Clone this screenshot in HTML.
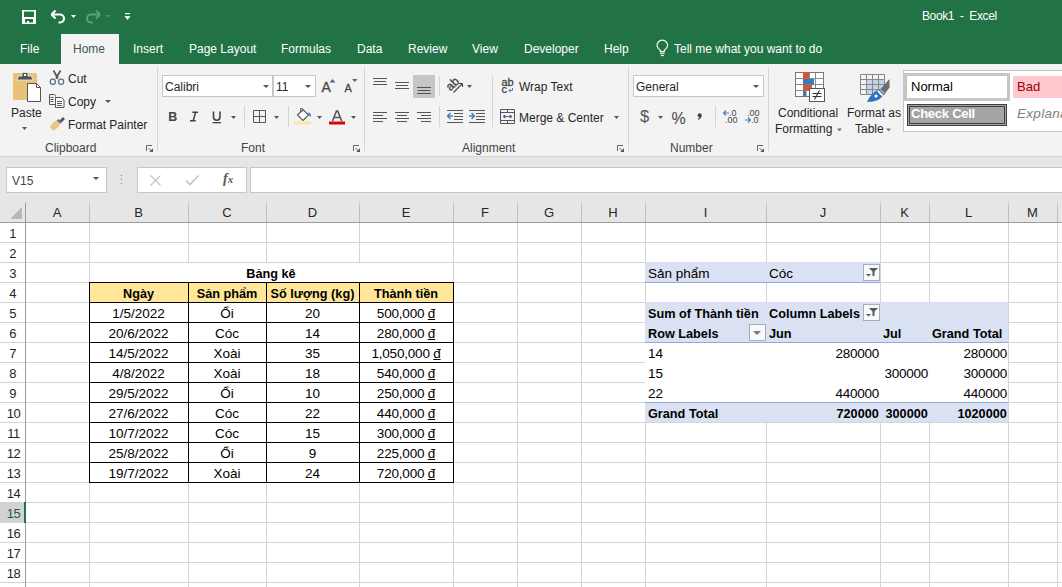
<!DOCTYPE html>
<html><head><meta charset="utf-8"><title>Excel</title><style>
*{margin:0;padding:0;box-sizing:border-box}
body{width:1062px;height:587px;overflow:hidden;position:relative;font-family:"Liberation Sans",sans-serif;background:#fff;color:#262626}
.a{position:absolute;white-space:nowrap}
.t12{font-size:12px;line-height:14px}
.w{color:#fff}
.c{font-size:13.5px;line-height:16px;color:#000}
.cb{font-size:12.7px;line-height:16px;color:#000;font-weight:bold}
.hl{position:absolute;height:1px}
.vl{position:absolute;width:1px}
svg{position:absolute;overflow:visible}
</style></head><body>

<div class="a" style="left:0;top:0;width:1062px;height:64px;background:#217346"></div>
<div class="a" style="left:61px;top:34px;width:58px;height:30px;background:#f3f3f3"></div>
<div class="a t12" style="left:20px;top:42px;color:#fff">File</div>
<div class="a t12" style="left:73px;top:42px;color:#3c5a47">Home</div>
<div class="a t12" style="left:133px;top:42px;color:#fff">Insert</div>
<div class="a t12" style="left:189px;top:42px;color:#fff">Page Layout</div>
<div class="a t12" style="left:281px;top:42px;color:#fff">Formulas</div>
<div class="a t12" style="left:357px;top:42px;color:#fff">Data</div>
<div class="a t12" style="left:408px;top:42px;color:#fff">Review</div>
<div class="a t12" style="left:472px;top:42px;color:#fff">View</div>
<div class="a t12" style="left:524px;top:42px;color:#fff">Developer</div>
<div class="a t12" style="left:604px;top:42px;color:#fff">Help</div>
<div class="a t12" style="left:674px;top:42px;color:#fff">Tell me what you want to do</div>
<div class="a t12" style="left:922px;top:9px;color:#fff;letter-spacing:-0.4px">Book1&nbsp; -&nbsp; Excel</div>
<div class="a" style="left:0;top:64px;width:1062px;height:92px;background:#f3f3f3"></div>
<div class="a" style="left:0;top:156px;width:1062px;height:1px;background:#d4d4d4"></div>
<div class="a" style="left:0;top:157px;width:1062px;height:66px;background:#e6e6e6"></div>
<div class="a" style="left:26px;top:223px;width:1036px;height:364px;background:#fff"></div>
<div class="hl" style="left:0;top:242px;width:1062px;background:#d4d4d4"></div>
<div class="hl" style="left:0;top:262px;width:1062px;background:#d4d4d4"></div>
<div class="hl" style="left:0;top:282px;width:1062px;background:#d4d4d4"></div>
<div class="hl" style="left:0;top:302px;width:1062px;background:#d4d4d4"></div>
<div class="hl" style="left:0;top:322px;width:1062px;background:#d4d4d4"></div>
<div class="hl" style="left:0;top:342px;width:1062px;background:#d4d4d4"></div>
<div class="hl" style="left:0;top:362px;width:1062px;background:#d4d4d4"></div>
<div class="hl" style="left:0;top:382px;width:1062px;background:#d4d4d4"></div>
<div class="hl" style="left:0;top:402px;width:1062px;background:#d4d4d4"></div>
<div class="hl" style="left:0;top:422px;width:1062px;background:#d4d4d4"></div>
<div class="hl" style="left:0;top:442px;width:1062px;background:#d4d4d4"></div>
<div class="hl" style="left:0;top:462px;width:1062px;background:#d4d4d4"></div>
<div class="hl" style="left:0;top:482px;width:1062px;background:#d4d4d4"></div>
<div class="hl" style="left:0;top:502px;width:1062px;background:#d4d4d4"></div>
<div class="hl" style="left:0;top:522px;width:1062px;background:#d4d4d4"></div>
<div class="hl" style="left:0;top:542px;width:1062px;background:#d4d4d4"></div>
<div class="hl" style="left:0;top:562px;width:1062px;background:#d4d4d4"></div>
<div class="hl" style="left:0;top:582px;width:1062px;background:#d4d4d4"></div>
<div class="vl" style="left:89px;top:222px;height:365px;background:#d4d4d4"></div>
<div class="vl" style="left:188px;top:222px;height:365px;background:#d4d4d4"></div>
<div class="vl" style="left:266px;top:222px;height:365px;background:#d4d4d4"></div>
<div class="vl" style="left:359px;top:222px;height:365px;background:#d4d4d4"></div>
<div class="vl" style="left:453px;top:222px;height:365px;background:#d4d4d4"></div>
<div class="vl" style="left:517px;top:222px;height:365px;background:#d4d4d4"></div>
<div class="vl" style="left:581px;top:222px;height:365px;background:#d4d4d4"></div>
<div class="vl" style="left:645px;top:222px;height:365px;background:#d4d4d4"></div>
<div class="vl" style="left:766px;top:222px;height:365px;background:#d4d4d4"></div>
<div class="vl" style="left:880px;top:222px;height:365px;background:#d4d4d4"></div>
<div class="vl" style="left:929px;top:222px;height:365px;background:#d4d4d4"></div>
<div class="vl" style="left:1008px;top:222px;height:365px;background:#d4d4d4"></div>
<div class="vl" style="left:1057px;top:222px;height:365px;background:#d4d4d4"></div>
<div class="hl" style="left:0;top:222px;width:1062px;background:#9b9b9b"></div>
<div class="vl" style="left:25px;top:203px;height:384px;background:#9b9b9b"></div>
<div class="vl" style="left:89px;top:200px;height:22px;background:linear-gradient(#e2e2e2,#bdbdbd 35%)"></div>
<div class="vl" style="left:188px;top:200px;height:22px;background:linear-gradient(#e2e2e2,#bdbdbd 35%)"></div>
<div class="vl" style="left:266px;top:200px;height:22px;background:linear-gradient(#e2e2e2,#bdbdbd 35%)"></div>
<div class="vl" style="left:359px;top:200px;height:22px;background:linear-gradient(#e2e2e2,#bdbdbd 35%)"></div>
<div class="vl" style="left:453px;top:200px;height:22px;background:linear-gradient(#e2e2e2,#bdbdbd 35%)"></div>
<div class="vl" style="left:517px;top:200px;height:22px;background:linear-gradient(#e2e2e2,#bdbdbd 35%)"></div>
<div class="vl" style="left:581px;top:200px;height:22px;background:linear-gradient(#e2e2e2,#bdbdbd 35%)"></div>
<div class="vl" style="left:645px;top:200px;height:22px;background:linear-gradient(#e2e2e2,#bdbdbd 35%)"></div>
<div class="vl" style="left:766px;top:200px;height:22px;background:linear-gradient(#e2e2e2,#bdbdbd 35%)"></div>
<div class="vl" style="left:880px;top:200px;height:22px;background:linear-gradient(#e2e2e2,#bdbdbd 35%)"></div>
<div class="vl" style="left:929px;top:200px;height:22px;background:linear-gradient(#e2e2e2,#bdbdbd 35%)"></div>
<div class="vl" style="left:1008px;top:200px;height:22px;background:linear-gradient(#e2e2e2,#bdbdbd 35%)"></div>
<div class="vl" style="left:1057px;top:200px;height:22px;background:linear-gradient(#e2e2e2,#bdbdbd 35%)"></div>
<div class="a" style="left:25px;width:64px;top:205px;font-size:13px;line-height:16px;text-align:center;color:#262626">A</div>
<div class="a" style="left:89px;width:99px;top:205px;font-size:13px;line-height:16px;text-align:center;color:#262626">B</div>
<div class="a" style="left:188px;width:78px;top:205px;font-size:13px;line-height:16px;text-align:center;color:#262626">C</div>
<div class="a" style="left:266px;width:93px;top:205px;font-size:13px;line-height:16px;text-align:center;color:#262626">D</div>
<div class="a" style="left:359px;width:94px;top:205px;font-size:13px;line-height:16px;text-align:center;color:#262626">E</div>
<div class="a" style="left:453px;width:64px;top:205px;font-size:13px;line-height:16px;text-align:center;color:#262626">F</div>
<div class="a" style="left:517px;width:64px;top:205px;font-size:13px;line-height:16px;text-align:center;color:#262626">G</div>
<div class="a" style="left:581px;width:64px;top:205px;font-size:13px;line-height:16px;text-align:center;color:#262626">H</div>
<div class="a" style="left:645px;width:121px;top:205px;font-size:13px;line-height:16px;text-align:center;color:#262626">I</div>
<div class="a" style="left:766px;width:114px;top:205px;font-size:13px;line-height:16px;text-align:center;color:#262626">J</div>
<div class="a" style="left:880px;width:49px;top:205px;font-size:13px;line-height:16px;text-align:center;color:#262626">K</div>
<div class="a" style="left:929px;width:79px;top:205px;font-size:13px;line-height:16px;text-align:center;color:#262626">L</div>
<div class="a" style="left:1008px;width:49px;top:205px;font-size:13px;line-height:16px;text-align:center;color:#262626">M</div>
<div class="a" style="left:0;top:503px;width:24px;height:19px;background:#d2d2d2"></div>
<div class="a" style="left:24px;top:502px;width:2px;height:21px;background:#217346"></div>
<div class="a" style="left:0px;width:25px;top:226px;font-size:13px;line-height:16px;text-align:center;letter-spacing:-0.6px;color:#262626">1</div>
<div class="a" style="left:0px;width:25px;top:246px;font-size:13px;line-height:16px;text-align:center;letter-spacing:-0.6px;color:#262626">2</div>
<div class="a" style="left:0px;width:25px;top:266px;font-size:13px;line-height:16px;text-align:center;letter-spacing:-0.6px;color:#262626">3</div>
<div class="a" style="left:0px;width:25px;top:286px;font-size:13px;line-height:16px;text-align:center;letter-spacing:-0.6px;color:#262626">4</div>
<div class="a" style="left:0px;width:25px;top:306px;font-size:13px;line-height:16px;text-align:center;letter-spacing:-0.6px;color:#262626">5</div>
<div class="a" style="left:0px;width:25px;top:326px;font-size:13px;line-height:16px;text-align:center;letter-spacing:-0.6px;color:#262626">6</div>
<div class="a" style="left:0px;width:25px;top:346px;font-size:13px;line-height:16px;text-align:center;letter-spacing:-0.6px;color:#262626">7</div>
<div class="a" style="left:0px;width:25px;top:366px;font-size:13px;line-height:16px;text-align:center;letter-spacing:-0.6px;color:#262626">8</div>
<div class="a" style="left:0px;width:25px;top:386px;font-size:13px;line-height:16px;text-align:center;letter-spacing:-0.6px;color:#262626">9</div>
<div class="a" style="left:1px;width:25px;top:406px;font-size:13px;line-height:16px;text-align:center;letter-spacing:-0.6px;color:#262626">10</div>
<div class="a" style="left:1px;width:25px;top:426px;font-size:13px;line-height:16px;text-align:center;letter-spacing:-0.6px;color:#262626">11</div>
<div class="a" style="left:1px;width:25px;top:446px;font-size:13px;line-height:16px;text-align:center;letter-spacing:-0.6px;color:#262626">12</div>
<div class="a" style="left:1px;width:25px;top:466px;font-size:13px;line-height:16px;text-align:center;letter-spacing:-0.6px;color:#262626">13</div>
<div class="a" style="left:1px;width:25px;top:486px;font-size:13px;line-height:16px;text-align:center;letter-spacing:-0.6px;color:#262626">14</div>
<div class="a" style="left:1px;width:25px;top:506px;font-size:13px;line-height:16px;text-align:center;letter-spacing:-0.6px;color:#1d5c37">15</div>
<div class="a" style="left:1px;width:25px;top:526px;font-size:13px;line-height:16px;text-align:center;letter-spacing:-0.6px;color:#262626">16</div>
<div class="a" style="left:1px;width:25px;top:546px;font-size:13px;line-height:16px;text-align:center;letter-spacing:-0.6px;color:#262626">17</div>
<div class="a" style="left:1px;width:25px;top:566px;font-size:13px;line-height:16px;text-align:center;letter-spacing:-0.6px;color:#262626">18</div>
<div class="a t12" style="left:11px;top:106px;">Paste</div>
<div class="a t12" style="left:68px;top:72px;">Cut</div>
<div class="a t12" style="left:68px;top:95px;">Copy</div>
<div class="a t12" style="left:68px;top:118px;">Format Painter</div>
<div class="a t12" style="left:45px;top:141px;color:#444">Clipboard</div>
<div class="a t12" style="left:241px;top:141px;color:#444">Font</div>
<div class="a t12" style="left:462px;top:141px;color:#444">Alignment</div>
<div class="a t12" style="left:670px;top:141px;color:#444">Number</div>
<div class="a t12" style="left:519px;top:80px;">Wrap Text</div>
<div class="a t12" style="left:519px;top:111px;">Merge &amp; Center</div>
<div class="a t12" style="left:778px;top:106px;">Conditional</div>
<div class="a t12" style="left:775px;top:122px;">Formatting</div>
<div class="a t12" style="left:847px;top:106px;">Format as</div>
<div class="a t12" style="left:855px;top:122px;">Table</div>
<div class="a" style="left:162px;top:75px;width:111px;height:22px;background:#fff;border:1px solid #c6c6c6"></div>
<div class="a" style="left:273px;top:75px;width:43px;height:22px;background:#fff;border:1px solid #c6c6c6"></div>
<div class="a t12" style="left:165px;top:80px;">Calibri</div>
<div class="a t12" style="left:276px;top:80px;">11</div>
<div class="a" style="left:633px;top:75px;width:131px;height:22px;background:#fff;border:1px solid #c6c6c6"></div>
<div class="a t12" style="left:636px;top:80px;">General</div>
<div class="a" style="left:903px;top:70px;width:170px;height:62px;background:#fff;border:1px solid #c6c6c6"></div>
<div class="a" style="left:904px;top:73px;width:106px;height:28px;border:3px solid #c6c6c6;background:#fff"></div>
<div class="a" style="left:911px;top:79px;font-size:13px;line-height:16px;color:#000">Normal</div>
<div class="a" style="left:1013px;top:76px;width:60px;height:22px;background:#ffc7ce"></div>
<div class="a" style="left:1017px;top:79px;font-size:13px;line-height:16px;color:#9c0006">Bad</div>
<div class="a" style="left:907px;top:104px;width:100px;height:22px;background:#a5a5a5;border:3px double #3f3f3f"></div>
<div class="a" style="left:911px;top:106px;font-size:13px;line-height:16px;color:#fff;font-weight:bold;letter-spacing:-0.25px">Check Cell</div>
<div class="a" style="left:1017px;top:106px;font-size:13.5px;line-height:16px;color:#7f7f7f;font-style:italic;letter-spacing:0.3px">Explanatory</div>
<div class="a" style="left:6px;top:167px;width:101px;height:26px;background:#fff;border:1px solid #c6c6c6"></div>
<div class="a" style="left:12px;top:174px;font-size:12px;line-height:14px;color:#444">V15</div>
<div class="a" style="left:137px;top:167px;width:110px;height:26px;background:#fff;border:1px solid #c6c6c6"></div>
<div class="a" style="left:250px;top:167px;width:812px;height:26px;background:#fff;border:1px solid #c6c6c6;border-right:none"></div>
<div class="a" style="left:223px;top:171px;font-family:'Liberation Serif';font-size:14px;line-height:16px;font-style:italic;font-weight:bold;color:#595959">f<span style="font-size:11px">x</span></div>
<div class="a" style="left:90px;top:263px;width:363px;height:19px;background:#fff"></div>
<div class="a cb" style="left:89px;width:364px;top:266px;text-align:center">Bảng kê</div>
<div class="a" style="left:89px;top:282px;width:365px;height:21px;background:#ffe699"></div>
<div class="hl" style="left:89px;top:282px;width:365px;background:#000"></div>
<div class="hl" style="left:89px;top:302px;width:365px;background:#000"></div>
<div class="hl" style="left:89px;top:322px;width:365px;background:#000"></div>
<div class="hl" style="left:89px;top:342px;width:365px;background:#000"></div>
<div class="hl" style="left:89px;top:362px;width:365px;background:#000"></div>
<div class="hl" style="left:89px;top:382px;width:365px;background:#000"></div>
<div class="hl" style="left:89px;top:402px;width:365px;background:#000"></div>
<div class="hl" style="left:89px;top:422px;width:365px;background:#000"></div>
<div class="hl" style="left:89px;top:442px;width:365px;background:#000"></div>
<div class="hl" style="left:89px;top:462px;width:365px;background:#000"></div>
<div class="hl" style="left:89px;top:482px;width:365px;background:#000"></div>
<div class="vl" style="left:89px;top:282px;height:201px;background:#000"></div>
<div class="vl" style="left:188px;top:282px;height:201px;background:#000"></div>
<div class="vl" style="left:266px;top:282px;height:201px;background:#000"></div>
<div class="vl" style="left:359px;top:282px;height:201px;background:#000"></div>
<div class="vl" style="left:453px;top:282px;height:201px;background:#000"></div>
<div class="a cb" style="left:49px;width:179px;top:286px;text-align:center;color:#000;">Ngày</div>
<div class="a cb" style="left:148px;width:158px;top:286px;text-align:center;color:#000;">Sản phẩm</div>
<div class="a cb" style="left:226px;width:173px;top:286px;text-align:center;color:#000;">Số lượng (kg)</div>
<div class="a cb" style="left:319px;width:174px;top:286px;text-align:center;color:#000;">Thành tiền</div>
<div class="a c" style="left:49px;width:179px;top:306px;text-align:center;color:#000;">1/5/2022</div>
<div class="a c" style="left:148px;width:158px;top:306px;text-align:center;color:#000;">Ổi</div>
<div class="a c" style="left:226px;width:173px;top:306px;text-align:center;color:#000;">20</div>
<div class="a c" style="left:319px;width:174px;top:306px;text-align:center;color:#000;letter-spacing:-0.2px">500,000 <span style="text-decoration:underline">đ</span></div>
<div class="a c" style="left:49px;width:179px;top:326px;text-align:center;color:#000;">20/6/2022</div>
<div class="a c" style="left:148px;width:158px;top:326px;text-align:center;color:#000;">Cóc</div>
<div class="a c" style="left:226px;width:173px;top:326px;text-align:center;color:#000;">14</div>
<div class="a c" style="left:319px;width:174px;top:326px;text-align:center;color:#000;letter-spacing:-0.2px">280,000 <span style="text-decoration:underline">đ</span></div>
<div class="a c" style="left:49px;width:179px;top:346px;text-align:center;color:#000;">14/5/2022</div>
<div class="a c" style="left:148px;width:158px;top:346px;text-align:center;color:#000;">Xoài</div>
<div class="a c" style="left:226px;width:173px;top:346px;text-align:center;color:#000;">35</div>
<div class="a c" style="left:319px;width:174px;top:346px;text-align:center;color:#000;letter-spacing:-0.2px">1,050,000 <span style="text-decoration:underline">đ</span></div>
<div class="a c" style="left:49px;width:179px;top:366px;text-align:center;color:#000;">4/8/2022</div>
<div class="a c" style="left:148px;width:158px;top:366px;text-align:center;color:#000;">Xoài</div>
<div class="a c" style="left:226px;width:173px;top:366px;text-align:center;color:#000;">18</div>
<div class="a c" style="left:319px;width:174px;top:366px;text-align:center;color:#000;letter-spacing:-0.2px">540,000 <span style="text-decoration:underline">đ</span></div>
<div class="a c" style="left:49px;width:179px;top:386px;text-align:center;color:#000;">29/5/2022</div>
<div class="a c" style="left:148px;width:158px;top:386px;text-align:center;color:#000;">Ổi</div>
<div class="a c" style="left:226px;width:173px;top:386px;text-align:center;color:#000;">10</div>
<div class="a c" style="left:319px;width:174px;top:386px;text-align:center;color:#000;letter-spacing:-0.2px">250,000 <span style="text-decoration:underline">đ</span></div>
<div class="a c" style="left:49px;width:179px;top:406px;text-align:center;color:#000;">27/6/2022</div>
<div class="a c" style="left:148px;width:158px;top:406px;text-align:center;color:#000;">Cóc</div>
<div class="a c" style="left:226px;width:173px;top:406px;text-align:center;color:#000;">22</div>
<div class="a c" style="left:319px;width:174px;top:406px;text-align:center;color:#000;letter-spacing:-0.2px">440,000 <span style="text-decoration:underline">đ</span></div>
<div class="a c" style="left:49px;width:179px;top:426px;text-align:center;color:#000;">10/7/2022</div>
<div class="a c" style="left:148px;width:158px;top:426px;text-align:center;color:#000;">Cóc</div>
<div class="a c" style="left:226px;width:173px;top:426px;text-align:center;color:#000;">15</div>
<div class="a c" style="left:319px;width:174px;top:426px;text-align:center;color:#000;letter-spacing:-0.2px">300,000 <span style="text-decoration:underline">đ</span></div>
<div class="a c" style="left:49px;width:179px;top:446px;text-align:center;color:#000;">25/8/2022</div>
<div class="a c" style="left:148px;width:158px;top:446px;text-align:center;color:#000;">Ổi</div>
<div class="a c" style="left:226px;width:173px;top:446px;text-align:center;color:#000;">9</div>
<div class="a c" style="left:319px;width:174px;top:446px;text-align:center;color:#000;letter-spacing:-0.2px">225,000 <span style="text-decoration:underline">đ</span></div>
<div class="a c" style="left:49px;width:179px;top:466px;text-align:center;color:#000;">19/7/2022</div>
<div class="a c" style="left:148px;width:158px;top:466px;text-align:center;color:#000;">Xoài</div>
<div class="a c" style="left:226px;width:173px;top:466px;text-align:center;color:#000;">24</div>
<div class="a c" style="left:319px;width:174px;top:466px;text-align:center;color:#000;letter-spacing:-0.2px">720,000 <span style="text-decoration:underline">đ</span></div>
<div class="a" style="left:645px;top:262px;width:235px;height:20px;background:#d9e1f2"></div>
<div class="hl" style="left:645px;top:282px;width:235px;background:#8ea9db"></div>
<div class="a" style="left:645px;top:302px;width:363px;height:40px;background:#d9e1f2"></div>
<div class="hl" style="left:645px;top:342px;width:363px;background:#8ea9db"></div>
<div class="a" style="left:645px;top:343px;width:363px;height:59px;background:#fff"></div>
<div class="a" style="left:645px;top:402px;width:363px;height:20px;background:#d9e1f2"></div>
<div class="hl" style="left:645px;top:402px;width:363px;background:#8ea9db"></div>
<div class="a c" style="left:648px;top:266px;color:#000;">Sản phẩm</div>
<div class="a c" style="left:769px;top:266px;color:#000;">Cóc</div>
<div class="a cb" style="left:648px;top:306px;color:#000;">Sum of Thành tiền</div>
<div class="a cb" style="left:769px;top:306px;color:#000;">Column Labels</div>
<div class="a cb" style="left:648px;top:326px;color:#000;">Row Labels</div>
<div class="a cb" style="left:769px;top:326px;color:#000;">Jun</div>
<div class="a cb" style="left:883px;top:326px;color:#000;">Jul</div>
<div class="a cb" style="left:932px;top:326px;color:#000;">Grand Total</div>
<div class="a c" style="left:648px;top:346px;color:#000;">14</div>
<div class="a c" style="right:183.0px;top:346px;text-align:right;color:#000;letter-spacing:-0.25px">280000</div>
<div class="a c" style="right:55.0px;top:346px;text-align:right;color:#000;letter-spacing:-0.25px">280000</div>
<div class="a c" style="left:648px;top:366px;color:#000;">15</div>
<div class="a c" style="right:134.0px;top:366px;text-align:right;color:#000;letter-spacing:-0.25px">300000</div>
<div class="a c" style="right:55.0px;top:366px;text-align:right;color:#000;letter-spacing:-0.25px">300000</div>
<div class="a c" style="left:648px;top:386px;color:#000;">22</div>
<div class="a c" style="right:183.0px;top:386px;text-align:right;color:#000;letter-spacing:-0.25px">440000</div>
<div class="a c" style="right:55.0px;top:386px;text-align:right;color:#000;letter-spacing:-0.25px">440000</div>
<div class="a cb" style="left:648px;top:406px;color:#000;">Grand Total</div>
<div class="a cb" style="right:183.20000000000005px;top:406px;text-align:right;color:#000;">720000</div>
<div class="a cb" style="right:134.20000000000005px;top:406px;text-align:right;color:#000;">300000</div>
<div class="a cb" style="right:55.200000000000045px;top:406px;text-align:right;color:#000;">1020000</div>
<div class="a" style="left:863px;top:264px;width:17px;height:17px;background:#f8f9fb;border:1px solid #a7aebb"></div>
<div class="a" style="left:863px;top:304px;width:17px;height:17px;background:#f8f9fb;border:1px solid #a7aebb"></div>
<div class="a" style="left:749px;top:324px;width:17px;height:17px;background:#f8f9fb;border:1px solid #a7aebb"></div>
<svg style="left:0;top:0" width="1062" height="587" viewBox="0 0 1062 587"><path d="M22 10h14v14h-14z M24 11.5v5.5h10v-5.5z M25 19v3.5h2v-1.5h2v1.5h4v-3.5z" fill="#fff" fill-rule="evenodd"/><path d="M52.5 14.5h7.5a4 4 0 0 1 0 8h-1.5" fill="none" stroke="#fff" stroke-width="2.2"/><path d="M51.5 14.5l4-4M51.5 14.5l4 4" stroke="#fff" stroke-width="2.2" fill="none"/><path d="M71 15h5l-2.5 3z" fill="#fff"/><path d="M99 14.5h-8a4 4 0 0 0 0 8h2" fill="none" stroke="#5f9e7a" stroke-width="2"/><path d="M100 14.5l-4-4M100 14.5l-4 4" stroke="#5f9e7a" stroke-width="2" fill="none"/><path d="M105.5 15h5l-2.5 3z" fill="#4e8f69"/><rect x="125" y="13" width="5" height="1.2" fill="#fff"/><path d="M124.5 16h6l-3 4z" fill="#fff"/><path d="M660.3 51.5v-1.3c-2.2-1.5-3.3-3-3.3-4.7a5.3 5.3 0 0 1 10.6 0c0 1.7-1.1 3.2-3.3 4.7v1.3z" fill="none" stroke="#fff" stroke-width="1.2"/><rect x="660" y="52.6" width="4.6" height="1.2" fill="#fff"/><rect x="660.8" y="54.9" width="3" height="1.2" fill="#fff"/><rect x="13" y="73" width="24" height="27" rx="1" fill="#e9c27a"/><path d="M17 80l1.5-4h3.5v-3.5h6v3.5h3.5l1.5 4z" fill="#555" stroke="#f3f3f3" stroke-width="0.8"/><rect x="24" y="74" width="2" height="2" fill="#fff"/><path d="M27.5 83.5h9l4 4v14h-13z" fill="#fff" stroke="#555" stroke-width="1"/><path d="M36.5 83.5v4h4" fill="none" stroke="#555" stroke-width="1"/><path d="M22 127h5l-2.5 3z" fill="#555"/><path d="M53.5 70.5l4.5 8M60.5 70.5l-4.5 8" stroke="#555" stroke-width="1.7" fill="none"/><circle cx="52.8" cy="81.8" r="2.6" fill="none" stroke="#5a6e85" stroke-width="1.2"/><circle cx="61.1" cy="81.8" r="2.6" fill="none" stroke="#5a6e85" stroke-width="1.2"/><path d="M55.5 96.5v-1l-1-1h-5v10h6" fill="none" stroke="#555" stroke-width="1"/><path d="M50.5 97.5h3M50.5 99.5h3M50.5 101.5h3" stroke="#555" stroke-width="1"/><path d="M55.5 97.5h6l2.5 2.5v7.5h-8.5z" fill="#fff" stroke="#555" stroke-width="1"/><path d="M57 101.5h5M57 103.5h5M57 105.5h5" stroke="#555" stroke-width="1"/><path d="M105 100h6l-3 3z" fill="#555"/><path d="M59 121l4-4l2 2l-4 4z" fill="#555"/><path d="M56.5 120.5l2-1.5l3 3l-1.5 2z" fill="#777"/><path d="M50 127.5c1.5-4 4-6.5 6.5-6.5l3 3c0 2.5-2.5 5-6.5 6.5z" fill="#ebc684"/><path d="M146.5 151v-5.5h5.5" fill="none" stroke="#666" stroke-width="1"/><path d="M148.5 148l3 3" fill="none" stroke="#666" stroke-width="1"/><path d="M153 148.3v3.7h-3.7z" fill="#555"/><path d="M353.5 151v-5.5h5.5" fill="none" stroke="#666" stroke-width="1"/><path d="M355.5 148l3 3" fill="none" stroke="#666" stroke-width="1"/><path d="M360 148.3v3.7h-3.7z" fill="#555"/><path d="M617.5 151v-5.5h5.5" fill="none" stroke="#666" stroke-width="1"/><path d="M619.5 148l3 3" fill="none" stroke="#666" stroke-width="1"/><path d="M624 148.3v3.7h-3.7z" fill="#555"/><path d="M757.5 151v-5.5h5.5" fill="none" stroke="#666" stroke-width="1"/><path d="M759.5 148l3 3" fill="none" stroke="#666" stroke-width="1"/><path d="M764 148.3v3.7h-3.7z" fill="#555"/><rect x="157" y="67" width="1" height="84" fill="#d5d5d5"/><rect x="364" y="67" width="1" height="84" fill="#d5d5d5"/><rect x="628" y="67" width="1" height="84" fill="#d5d5d5"/><rect x="768" y="67" width="1" height="84" fill="#d5d5d5"/><rect x="244" y="106" width="1" height="21" fill="#d5d5d5"/><rect x="288" y="106" width="1" height="21" fill="#d5d5d5"/><rect x="439" y="76" width="1" height="20" fill="#d5d5d5"/><rect x="439" y="106" width="1" height="21" fill="#d5d5d5"/><rect x="492" y="76" width="1" height="51" fill="#d5d5d5"/><rect x="715" y="106" width="1" height="21" fill="#d5d5d5"/><path d="M263 85h6l-3 3z" fill="#555"/><path d="M305 85h6l-3 3z" fill="#555"/><path d="M753 85h6l-3 3z" fill="#555"/><path d="M93 177h6l-3 3z" fill="#555"/><text x="321.5" y="92" font-family="Liberation Sans" font-size="14" fill="#444" stroke="#444" stroke-width="0.3">A</text><path d="M329.5 82.5h6l-3-3.5z" fill="#4a6a8f"/><text x="344.5" y="92" font-family="Liberation Sans" font-size="11" fill="#444" stroke="#444" stroke-width="0.3">A</text><path d="M352 79h5.5l-2.75 3z" fill="#4a6a8f"/><text x="168.3" y="121" font-family="Liberation Sans" font-weight="bold" font-size="12.5" fill="#444">B</text><path d="M192.3 112.2h5.7M190 120.8h5.7M195.6 112.2l-2.4 8.6" fill="none" stroke="#444" stroke-width="1.5"/><path d="M213.5 111.5v5.5a3.25 3.25 0 0 0 6.5 0v-5.5" fill="none" stroke="#444" stroke-width="1.6"/><rect x="212.5" y="122" width="8.5" height="1.3" fill="#444"/><path d="M231 116h5l-2.5 3z" fill="#555"/><path d="M274 116h5l-2.5 3z" fill="#555"/><path d="M317 116h5l-2.5 3z" fill="#555"/><path d="M351 116h5l-2.5 3z" fill="#555"/><path d="M658 116h5l-2.5 3z" fill="#555"/><path d="M253.5 110.5h12v12h-12z M259.5 110.5v12 M253.5 116.5h12" fill="none" stroke="#555" stroke-width="1"/><path d="M297.5 115l5.5-5.5l5.5 5.5l-5.5 5.5z" fill="#fff" stroke="#555" stroke-width="1.1"/><path d="M300.5 112v-3.5h2v3" fill="none" stroke="#555" stroke-width="0.9"/><path d="M308 112.5c2 0 3.5 1.8 3 4.5l-2.5-2z" fill="#3d7cc9"/><rect x="294" y="121.5" width="17" height="3" fill="#fbe5a8"/><path d="M332.5 121l4-10h1.2l4 10M334 117.5h6" fill="none" stroke="#555" stroke-width="1.6"/><rect x="329" y="121.5" width="16" height="3" fill="#e00000"/><rect x="413" y="75" width="22" height="23" fill="#c6c6c6"/><rect x="373" y="78" width="14" height="1" fill="#555"/><rect x="374" y="81" width="12" height="1" fill="#555"/><rect x="373" y="84" width="14" height="1" fill="#555"/><rect x="395" y="82" width="14" height="1" fill="#555"/><rect x="396" y="85" width="12" height="1" fill="#555"/><rect x="395" y="88" width="14" height="1" fill="#555"/><rect x="417" y="87" width="14" height="1" fill="#555"/><rect x="418" y="90" width="12" height="1" fill="#555"/><rect x="417" y="93" width="14" height="1" fill="#555"/><rect x="373" y="112" width="14" height="1" fill="#555"/><rect x="373" y="115" width="10" height="1" fill="#555"/><rect x="373" y="118" width="14" height="1" fill="#555"/><rect x="373" y="121" width="10" height="1" fill="#555"/><rect x="395" y="112" width="14" height="1" fill="#555"/><rect x="397" y="115" width="10" height="1" fill="#555"/><rect x="395" y="118" width="14" height="1" fill="#555"/><rect x="397" y="121" width="10" height="1" fill="#555"/><rect x="417" y="112" width="14" height="1" fill="#555"/><rect x="421" y="115" width="10" height="1" fill="#555"/><rect x="417" y="118" width="14" height="1" fill="#555"/><rect x="421" y="121" width="10" height="1" fill="#555"/><rect x="447" y="110" width="16" height="1" fill="#555"/><rect x="447" y="122" width="16" height="1" fill="#555"/><rect x="454" y="113" width="9" height="1" fill="#555"/><rect x="454" y="116" width="9" height="1" fill="#555"/><rect x="454" y="119" width="9" height="1" fill="#555"/><rect x="469" y="110" width="16" height="1" fill="#555"/><rect x="469" y="122" width="16" height="1" fill="#555"/><rect x="476" y="113" width="9" height="1" fill="#555"/><rect x="476" y="116" width="9" height="1" fill="#555"/><rect x="476" y="119" width="9" height="1" fill="#555"/><path d="M447 116h6M447.5 116l3-3M447.5 116l3 3" fill="none" stroke="#4a7ebb" stroke-width="1.5"/><path d="M469 116h6M474.5 116l-3-3M474.5 116l-3 3" fill="none" stroke="#4a7ebb" stroke-width="1.5"/><text x="0" y="0" transform="translate(450.5 91.5) rotate(-45)" font-family="Liberation Sans" font-size="12" fill="#444" stroke="#444" stroke-width="0.35">ab</text><path d="M453.5 92.5l9-9M462.5 83.5h-3.5M462.5 83.5v3.5" fill="none" stroke="#444" stroke-width="1.1"/><path d="M467 85h5l-2.5 3z" fill="#555"/><text x="501.5" y="86.3" font-family="Liberation Sans" font-size="11" fill="#444" stroke="#444" stroke-width="0.3">ab</text><text x="501.5" y="93" font-family="Liberation Sans" font-size="11" fill="#444" stroke="#444" stroke-width="0.3">c</text><path d="M512.5 88v2.5h-3.5M509 90.5l1.6-1.6M509 90.5l1.6 1.6" fill="none" stroke="#4a7ebb" stroke-width="1"/><path d="M500.5 109.5h14v14h-14z M500.5 112.5h14 M500.5 120.5h14 M507.5 109.5v3 M507.5 120.5v3" fill="none" stroke="#555" stroke-width="1"/><path d="M503 116.5h9M503 116.5l2-1.5v3zM512 116.5l-2-1.5v3z" fill="#4f6a8a" stroke="#4f6a8a" stroke-width="1"/><path d="M614 116h5l-2.5 3z" fill="#555"/><text x="640" y="122" font-family="Liberation Sans" font-size="16.5" fill="#555">$</text><text x="671.5" y="123.5" font-family="Liberation Sans" font-size="16" fill="#444">%</text><circle cx="699.6" cy="115.3" r="2" fill="#444"/><path d="M701.6 115.3q0 3.3-3.4 4.4l-0.4-0.9q1.8-0.9 1.9-2.6z" fill="#444"/><path d="M723 113h6M723.5 113l2.5-2.5M723.5 113l2.5 2.5" fill="none" stroke="#4a7ebb" stroke-width="1.2"/><text x="729" y="116" font-family="Liberation Sans" font-size="9" fill="#444">.0</text><text x="725" y="123" font-family="Liberation Sans" font-size="9" fill="#444">.00</text><text x="747" y="116" font-family="Liberation Sans" font-size="9" fill="#444">.00</text><path d="M745 120h6M750.5 120l-2.5-2.5M750.5 120l-2.5 2.5" fill="none" stroke="#4a7ebb" stroke-width="1.2"/><text x="751" y="123" font-family="Liberation Sans" font-size="9" fill="#444">.0</text><rect x="795.5" y="72.5" width="28" height="24" fill="#fff" stroke="#777" stroke-width="1"/><path d="M803.5 72.5v24M809.5 72.5v24M815.5 72.5v24M795.5 78.5h28M795.5 84.5h28M795.5 90.5h28" fill="none" stroke="#8a8a8a" stroke-width="1"/><rect x="803" y="72" width="6" height="6.5" fill="#e2502a"/><rect x="803" y="79" width="11" height="5.5" fill="#3a78c3"/><rect x="803" y="85" width="9" height="5.5" fill="#e2502a"/><rect x="803" y="91" width="3.5" height="5.5" fill="#3a78c3"/><rect x="809.5" y="88.5" width="15" height="13" fill="#fff" stroke="#555" stroke-width="1"/><path d="M812.5 93.5h9M812.5 96.5h9M819.5 90.5l-5 9" fill="none" stroke="#333" stroke-width="1.1"/><path d="M837 128.5h5l-2.5 3z" fill="#777"/><path d="M886 128.5h5l-2.5 3z" fill="#777"/><rect x="866" y="80" width="19" height="15" fill="#c5d3e6"/><path d="M860.5 74.5h24v20h-24z M866.5 74.5v20 M872.5 74.5v20 M878.5 74.5v20 M860.5 79.5h24 M860.5 84.5h24 M860.5 89.5h24" fill="none" stroke="#888" stroke-width="1"/><path d="M889.5 79l-9 10l4.5 4.5l4.5-6z" fill="#6d6d6d"/><path d="M879.5 89.5l4.5 4.5c-2.5 5-8 8-17 8c2.5-5.5 6-10.5 12.5-12.5z" fill="#2f72c0"/><path d="M878 91l4.5 4.5" stroke="#fff" stroke-width="1.8"/><circle cx="876" cy="96" r="1.6" fill="#fff"/><path d="M150.5 175.5l10 10M160.5 175.5l-10 10" stroke="#c4c4c4" stroke-width="1.3"/><path d="M186 180.5l4 4l8.5-9" fill="none" stroke="#c4c4c4" stroke-width="1.6"/><circle cx="121.5" cy="175.5" r="0.8" fill="#999"/><circle cx="121.5" cy="179.5" r="0.8" fill="#999"/><circle cx="121.5" cy="183.5" r="0.8" fill="#999"/><path d="M22 207v12h-12z" fill="#b8b8b8"/><path d="M869 268h9l-3.5 3.5v4.5h-2v-4.5z" fill="#595959"/><path d="M866 274h5l-2.5 2.5z" fill="#595959"/><path d="M869 308h9l-3.5 3.5v4.5h-2v-4.5z" fill="#595959"/><path d="M866 314h5l-2.5 2.5z" fill="#595959"/><path d="M753 331h8l-4 4z" fill="#777"/></svg>
</body></html>
